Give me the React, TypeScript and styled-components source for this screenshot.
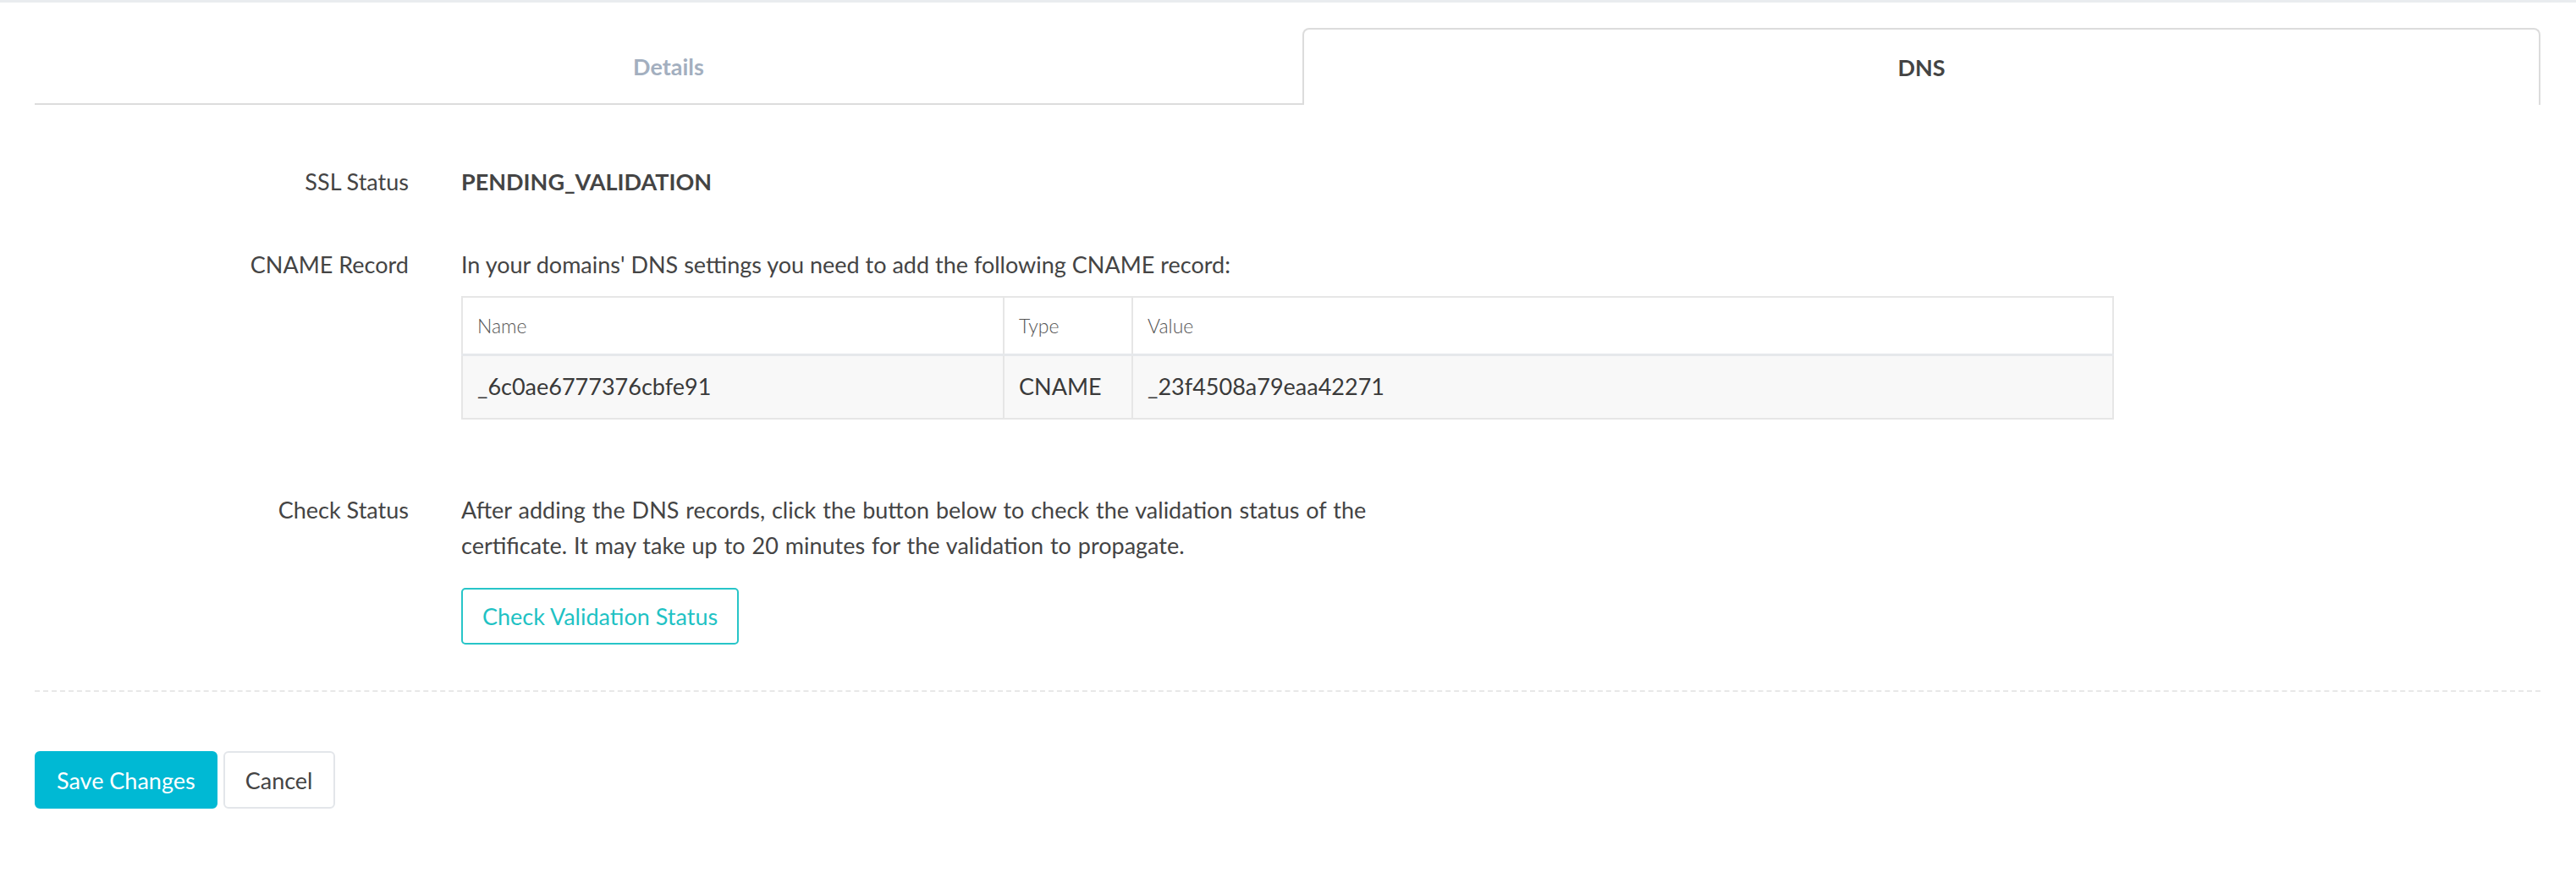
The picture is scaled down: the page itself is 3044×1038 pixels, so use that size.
import styled, { createGlobalStyle } from "styled-components";

const GlobalStyle = createGlobalStyle`
  html, body {
    margin: 0;
    padding: 0;
    background: #fff;
  }
  body {
    font-family: Lato, "Open Sans", sans-serif;
    color: #444;
    border-top: 3px solid #e9ecef;
  }
  * {
    box-sizing: border-box;
  }
`;

const Page = styled.div`
  padding: 30px 42px 80px 41px;
`;

const Tabs = styled.div`
  display: grid;
  grid-template-columns: 1498fr 1463fr;
  height: 91px;
`;

const Tab = styled.div<{ $active?: boolean }>`
  display: flex;
  align-items: center;
  justify-content: center;
  font-size: 27px;
  font-weight: 700;
  color: ${(p) => (p.$active ? "#444" : "#a3afbf")};
  border-bottom: ${(p) => (p.$active ? "none" : "2px solid #dcdcdc")};
  border-top: ${(p) => (p.$active ? "2px solid #dcdcdc" : "none")};
  border-left: ${(p) => (p.$active ? "2px solid #dcdcdc" : "none")};
  border-right: ${(p) => (p.$active ? "2px solid #dcdcdc" : "none")};
  border-radius: ${(p) => (p.$active ? "8px 8px 0 0" : "0")};
  margin-top: ${(p) => (p.$active ? "0" : "2px")};
`;

const Form = styled.div`
  padding-top: 70px;
  display: flex;
  flex-direction: column;
  gap: 56px;
`;

const FieldRow = styled.div`
  display: grid;
  grid-template-columns: 442px 1fr;
  column-gap: 62px;
  font-size: 27px;
  line-height: 42px;
`;

const Label = styled.div`
  text-align: right;
  color: #444;
`;

const Value = styled.div<{ $strong?: boolean }>`
  color: #444;
  font-weight: ${(p) => (p.$strong ? 700 : 400)};
`;

const Paragraph = styled.p`
  margin: 0;
  max-width: 1120px;
  word-spacing: 1px;
`;

const RecordTable = styled.table`
  width: 1953px;
  margin: 16px 0 30px;
  border-collapse: collapse;
  border: 2px solid #e6e6e6;
`;

const HeadCell = styled.th<{ $w?: string }>`
  width: ${(p) => p.$w || "auto"};
  height: 68px;
  padding: 0 17px;
  text-align: left;
  font-size: 23px;
  font-weight: 300;
  color: #555;
  border-right: 2px solid #e6e6e6;
  border-bottom: 3px solid #e6e8eb;
`;

const BodyCell = styled.td`
  height: 76px;
  padding: 0 17px;
  font-size: 27px;
  color: #3a3a3a;
  background: #f8f8f8;
  border-right: 2px solid #e6e6e6;
`;

const OutlineButton = styled.button`
  margin-top: 29px;
  height: 67px;
  padding: 0 23px;
  font-family: inherit;
  font-size: 27px;
  color: #1fc2c4;
  background: #fff;
  border: 2px solid #27c5c8;
  border-radius: 5px;
`;

const Divider = styled.hr`
  margin: 54px 0 0;
  border: none;
  border-top: 2px dashed #e8e8e8;
`;

const Actions = styled.div`
  display: flex;
  gap: 7px;
  margin-top: 70px;
`;

const ActionButton = styled.button<{ $primary?: boolean }>`
  height: 68px;
  padding: 0 ${(p) => (p.$primary ? "24px" : "24px")};
  font-family: inherit;
  font-size: 27px;
  border-radius: 6px;
  color: ${(p) => (p.$primary ? "#fff" : "#444")};
  background: ${(p) => (p.$primary ? "#00b9d4" : "#fff")};
  border: 2px solid ${(p) => (p.$primary ? "#00b9d4" : "#e3e6ea")};
`;

export default function App() {
  return (
    <>
      <GlobalStyle />
      <Page>
        <Tabs>
          <Tab>Details</Tab>
          <Tab $active>DNS</Tab>
        </Tabs>

        <Form>
          <FieldRow>
            <Label>SSL Status</Label>
            <Value $strong>PENDING_VALIDATION</Value>
          </FieldRow>

          <FieldRow>
            <Label>CNAME Record</Label>
            <Value>
              In your domains' DNS settings you need to add the following CNAME record:
              <RecordTable>
                <thead>
                  <tr>
                    <HeadCell $w="640px">Name</HeadCell>
                    <HeadCell $w="152px">Type</HeadCell>
                    <HeadCell>Value</HeadCell>
                  </tr>
                </thead>
                <tbody>
                  <tr>
                    <BodyCell>_6c0ae6777376cbfe91</BodyCell>
                    <BodyCell>CNAME</BodyCell>
                    <BodyCell>_23f4508a79eaa42271</BodyCell>
                  </tr>
                </tbody>
              </RecordTable>
            </Value>
          </FieldRow>

          <FieldRow>
            <Label>Check Status</Label>
            <Value>
              <Paragraph>
                After adding the DNS records, click the button below to check the validation
                status of the certificate. It may take up to 20 minutes for the validation to
                propagate.
              </Paragraph>
              <OutlineButton>Check Validation Status</OutlineButton>
            </Value>
          </FieldRow>
        </Form>

        <Divider />

        <Actions>
          <ActionButton $primary>Save Changes</ActionButton>
          <ActionButton>Cancel</ActionButton>
        </Actions>
      </Page>
    </>
  );
}
